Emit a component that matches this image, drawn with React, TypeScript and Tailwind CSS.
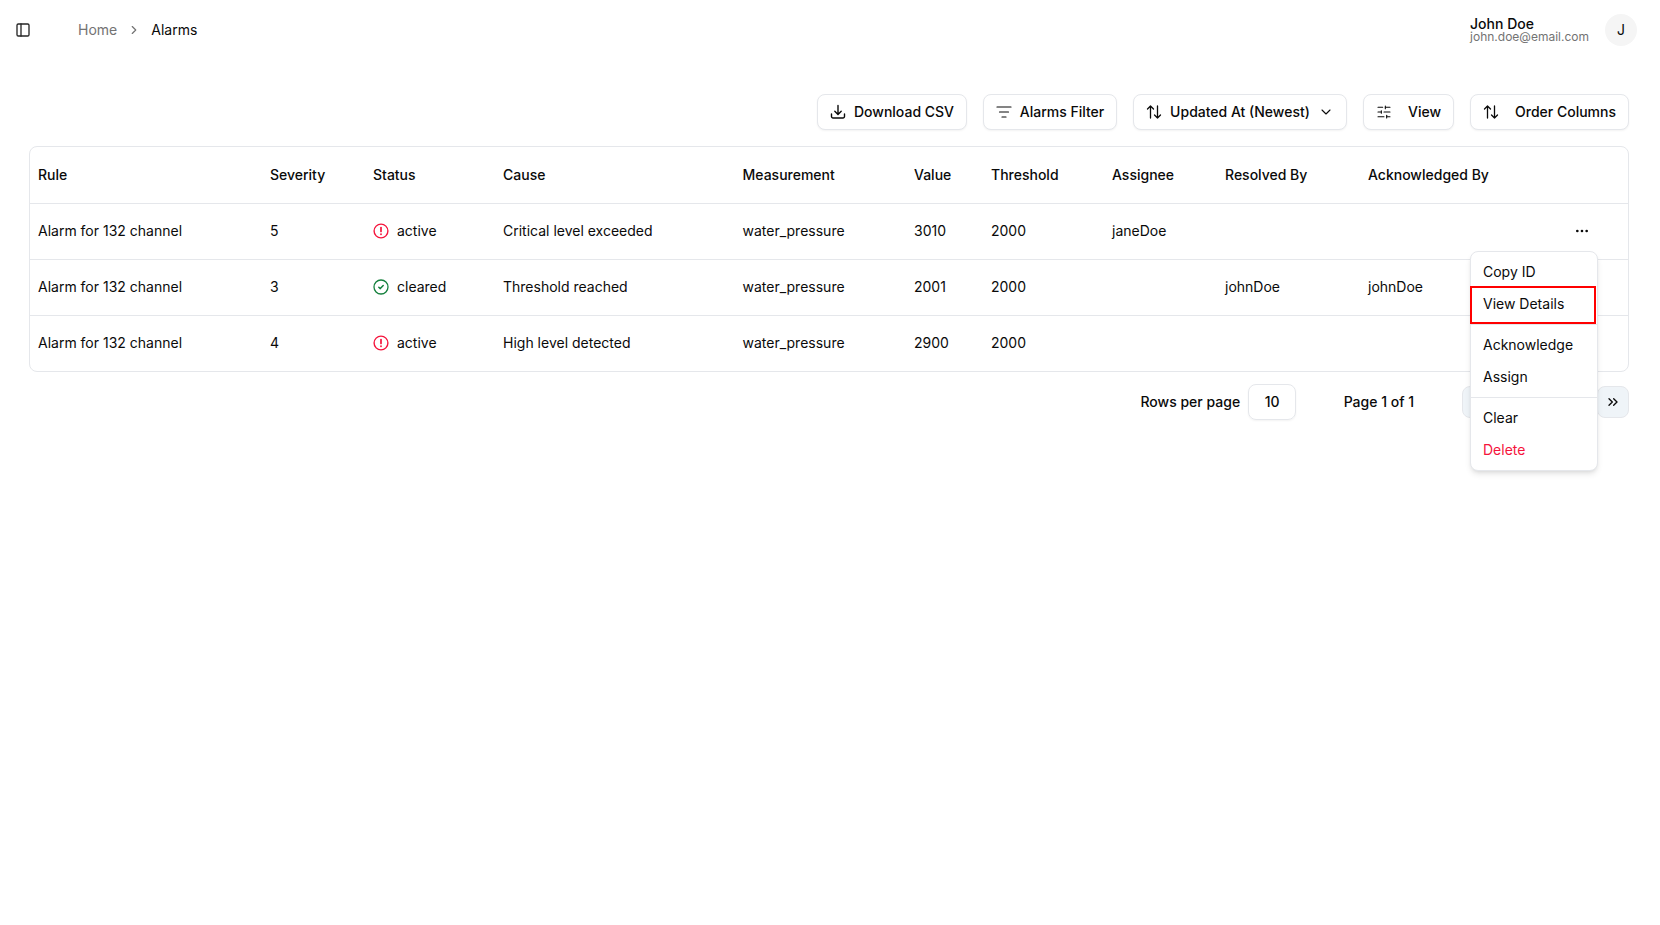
import { ChevronDown, ChevronRight, ChevronsLeft, ChevronLeft, ChevronsRight, Ellipsis, PanelLeft, SlidersHorizontal } from 'lucide-react';

const rows = [
  { rule: 'Alarm for 132 channel', severity: '5', status: 'active', cause: 'Critical level exceeded', value: '3010', assignee: 'janeDoe', resolvedBy: '', ackBy: '' },
  { rule: 'Alarm for 132 channel', severity: '3', status: 'cleared', cause: 'Threshold reached', value: '2001', assignee: '', resolvedBy: 'johnDoe', ackBy: 'johnDoe' },
  { rule: 'Alarm for 132 channel', severity: '4', status: 'active', cause: 'High level detected', value: '2900', assignee: '', resolvedBy: '', ackBy: '' },
];

const headers = ['Rule', 'Severity', 'Status', 'Cause', 'Measurement', 'Value', 'Threshold', 'Assignee', 'Resolved By', 'Acknowledged By'];

function ToolButton({ children, className }: { children: React.ReactNode; className: string }) {
  return (
    <button className={`h-9 flex items-center rounded-lg border border-[#e5e7eb] bg-white text-sm font-medium text-[#0a0a0a] shadow-xs ${className}`}>
      {children}
    </button>
  );
}

function DownloadIcon() {
  return (
    <svg width="16" height="16" viewBox="0 0 16 16" fill="none" stroke="currentColor" strokeWidth="1.4" strokeLinecap="round" strokeLinejoin="round">
      <path d="M8 1.5V10.3M4.8 7.3 8 10.5l3.2-3.2" />
      <path d="M1.5 10v2.5A1.5 1.5 0 0 0 3 14h10a1.5 1.5 0 0 0 1.5-1.5V10" />
    </svg>
  );
}

function FilterIcon() {
  return (
    <svg width="16" height="16" viewBox="0 0 16 16" fill="none" stroke="currentColor" strokeWidth="1.2" strokeLinecap="round">
      <path d="M1 3h14M3.5 8h9M6 13h4" />
    </svg>
  );
}

function SortIcon() {
  return (
    <svg width="16" height="16" viewBox="0 0 16 16" fill="none" stroke="currentColor" strokeWidth="1.3" strokeLinecap="round" strokeLinejoin="round">
      <path d="M4.5 14V2M1.5 5l3-3 3 3" />
      <path d="M11.5 2v12M8.5 11l3 3 3-3" />
    </svg>
  );
}

function AlertIcon() {
  return (
    <svg width="16" height="16" viewBox="0 0 16 16" fill="none" stroke="#f5143c" strokeWidth="1.4" strokeLinecap="round">
      <circle cx="8" cy="8" r="6.9" />
      <path d="M8 4.6v3.8" strokeWidth="1.7" />
      <path d="M8 11.2v.1" strokeWidth="1.8" />
    </svg>
  );
}

function ClearedIcon() {
  return (
    <svg width="16" height="16" viewBox="0 0 16 16" fill="none" stroke="#15803d" strokeWidth="1.3" strokeLinecap="round" strokeLinejoin="round">
      <circle cx="8" cy="8" r="7" />
      <path d="M5.8 8.2l1.5 1.4 2.9-3" strokeWidth="1.5" />
    </svg>
  );
}

export default function App() {
  return (
    <div className="relative min-h-[925px] bg-white font-['Inter',sans-serif] text-[#0a0a0a]">
      {/* Header */}
      <header className="h-[60px] flex items-center justify-between pl-[15px] pr-[23px]">
        <div className="flex items-center">
          <PanelLeft size={16} className="text-[#262626]" />
          <nav className="ml-[47px] flex items-center text-sm">
            <span className="text-[#737373]">Home</span>
            <ChevronRight size={14} className="mx-[10px] text-[#737373]" />
            <span>Alarms</span>
          </nav>
        </div>
        <div className="flex items-center gap-4">
          <div className="flex flex-col">
            <span className="text-sm font-medium leading-[14px]">John Doe</span>
            <span className="text-xs leading-[12px] text-[#737373]">john.doe@email.com</span>
          </div>
          <div className="w-8 h-8 rounded-full bg-[#f5f5f5] flex items-center justify-center text-sm">J</div>
        </div>
      </header>

      <main className="pl-[29px] pr-[31px] pt-[34px]">
        {/* Toolbar */}
        <div className="flex justify-end gap-4">
          <ToolButton className="w-[150px] justify-center gap-2">
            <DownloadIcon />
            Download CSV
          </ToolButton>
          <ToolButton className="w-[134px] justify-center gap-2">
            <FilterIcon />
            Alarms Filter
          </ToolButton>
          <ToolButton className="w-[214px] justify-center gap-2">
            <SortIcon />
            Updated At (Newest)
            <ChevronDown size={16} strokeWidth={1.6} />
          </ToolButton>
          <ToolButton className="w-[91px] justify-center gap-4">
            <SlidersHorizontal size={16} strokeWidth={1.6} />
            View
          </ToolButton>
          <ToolButton className="w-[159px] justify-center gap-4">
            <SortIcon />
            Order Columns
          </ToolButton>
        </div>

        {/* Table */}
        <div className="mt-4 rounded-lg border border-[#e5e7eb] overflow-hidden">
          <table className="w-full table-fixed text-sm">
            <colgroup>
              <col className="w-[232px]" />
              <col className="w-[103px]" />
              <col className="w-[130px]" />
              <col className="w-[239.5px]" />
              <col className="w-[171.5px]" />
              <col className="w-[77px]" />
              <col className="w-[121px]" />
              <col className="w-[113px]" />
              <col className="w-[143px]" />
              <col className="w-[200px]" />
              <col />
            </colgroup>
            <thead>
              <tr className="h-14 border-b border-[#e5e7eb]">
                {headers.map((h) => (
                  <th key={h} className="px-2 text-left font-medium">{h}</th>
                ))}
                <th />
              </tr>
            </thead>
            <tbody>
              {rows.map((r, i) => (
                <tr key={i} className="h-14 border-b border-[#e5e7eb] last:border-b-0">
                  <td className="px-2">{r.rule}</td>
                  <td className="px-2">{r.severity}</td>
                  <td className="px-2">
                    <div className="flex items-center gap-2">
                      {r.status === 'active' ? <AlertIcon /> : <ClearedIcon />}
                      {r.status}
                    </div>
                  </td>
                  <td className="px-2">{r.cause}</td>
                  <td className="px-2">water_pressure</td>
                  <td className="px-2">{r.value}</td>
                  <td className="px-2">2000</td>
                  <td className="px-2">{r.assignee}</td>
                  <td className="px-2">{r.resolvedBy}</td>
                  <td className="px-2">{r.ackBy}</td>
                  <td className="px-2">
                    {i === 0 && <Ellipsis size={16} className="ml-auto mr-[30px]" />}
                  </td>
                </tr>
              ))}
            </tbody>
          </table>
        </div>

        {/* Pagination */}
        <div className="mt-[12px] flex items-center justify-end text-sm font-medium">
          <span>Rows per page</span>
          <div className="ml-2 w-12 h-9 rounded-lg border border-[#e5e7eb] shadow-xs flex items-center justify-center">10</div>
          <span className="ml-[47.5px] mr-[48px]">Page 1 of 1</span>
          <div className="flex gap-[13px]">
            <button className="w-8 h-8 rounded-lg border border-[#e5e7eb] bg-[#eff4f8] flex items-center justify-center"><ChevronsLeft size={16} /></button>
            <button className="w-8 h-8 rounded-lg border border-[#e5e7eb] bg-[#eff4f8] flex items-center justify-center"><ChevronLeft size={16} /></button>
            <button className="w-8 h-8 rounded-lg border border-[#e5e7eb] bg-[#eff4f8] flex items-center justify-center"><ChevronRight size={16} /></button>
            <button className="w-8 h-8 rounded-lg border border-[#e5e7eb] bg-[#eff4f8] flex items-center justify-center"><ChevronsRight size={16} /></button>
          </div>
        </div>
      </main>

      {/* Row actions menu */}
      <div className="absolute left-[1470px] top-[251px] w-[128px] rounded-lg border border-[#e5e7eb] bg-white p-1 text-sm shadow-md">
        <div className="h-8 px-2 flex items-center">Copy ID</div>
        <div className="h-8 px-2 flex items-center">View Details</div>
        <div className="my-1 -mx-1 h-px bg-[#e5e7eb]" />
        <div className="h-8 px-2 flex items-center">Acknowledge</div>
        <div className="h-8 px-2 flex items-center">Assign</div>
        <div className="my-1 -mx-1 h-px bg-[#e5e7eb]" />
        <div className="h-8 px-2 flex items-center">Clear</div>
        <div className="h-8 px-2 flex items-center text-[#f5143c]">Delete</div>
        {/* annotation box around View Details */}
        <div className="absolute -left-px top-[34px] w-[126px] h-[38px] border-2 border-[#ff0000]" />
      </div>
    </div>
  );
}
